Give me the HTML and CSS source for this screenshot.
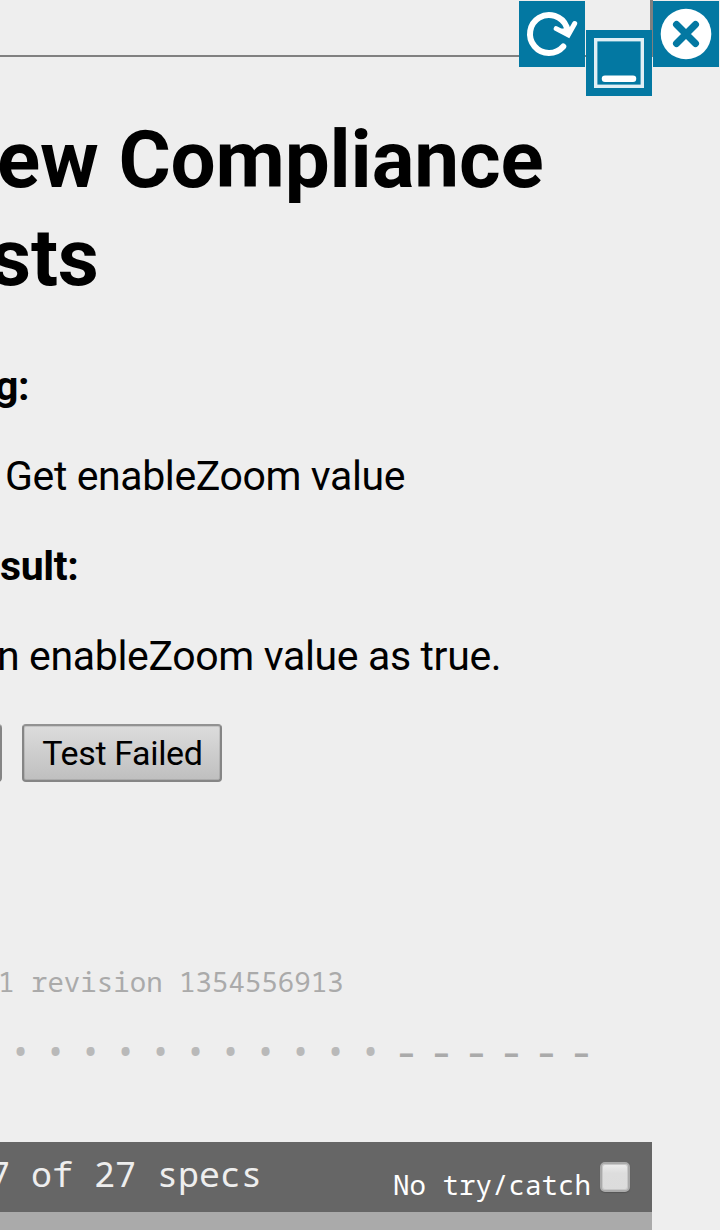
FILE: index.html
```
<!DOCTYPE html>
<html lang="en">
<head>
<meta charset="utf-8">
<title>Compliance Tests</title>
<link rel="stylesheet" href="styles.css">
</head>
<body>
<div class="frame-edge"></div>
<div class="controls">
  <svg class="control" viewBox="0 0 66 66"><rect class="tile" width="66" height="66"/><path class="reload" d="M44.3 45.5A19 19 0 1 1 47.5 25.6L49 31"/><path class="arrow" d="M37.2 27.6L49.3 34L55.7 22.5"/><path class="arrow-fill" d="M41 28L52.5 26L50 34Z"/></svg>
  <svg class="control control-low" viewBox="0 0 66 66"><rect class="tile" width="66" height="66"/><rect class="window" x="9.7" y="9.7" width="46.6" height="46.6"/><path class="bar" d="M19 48.7H47"/></svg>
  <svg class="control" viewBox="0 0 66 66"><rect class="tile" width="66" height="66"/><circle class="disc" cx="33" cy="33" r="25.3"/><path class="cross" d="M23.5 23.5L42.5 42.5M42.5 23.5L23.5 42.5"/></svg>
</div>
<main>
  <h1><span class="h-one">ew Compliance</span><br><span class="h-two">sts</span></h1>
  <h3 class="t-g">g:</h3>
  <p class="t-get">Get enableZoom value</p>
  <h3 class="t-result">sult:</h3>
  <p class="t-expect">n enableZoom value as true.</p>
  <div class="buttons"><button class="cut" aria-label="Previous"></button><button class="failed"><span>Test Failed</span></button></div>
  <div class="version">1 revision 1354556913</div>
  <div class="symbols"><i>•</i><i>•</i><i>•</i><i>•</i><i>•</i><i>•</i><i>•</i><i>•</i><i>•</i><i>•</i><i>•</i><b>-</b><b>-</b><b>-</b><b>-</b><b>-</b><b>-</b></div>
  <div class="alert"><span class="specs">7 of 27 specs</span><label><span>No try/catch</span><span class="check"></span></label></div>
  <div class="result-bar"></div>
</main>
</body>
</html>
```
FILE: styles.css
```
* { box-sizing: border-box; }
body { margin: 0; width: 720px; height: 1230px; overflow: hidden; background: #eee; color: #000; font-family: Roboto, sans-serif; position: relative; display: flex; flex-direction: column; }
.frame-edge { flex: none; width: 653px; height: 57px; border: solid #808080; border-width: 0 3px 2px 0; }
.controls { position: absolute; top: 1px; right: 1px; display: flex; gap: 1px; }
.control { width: 66px; height: 66px; display: block; }
.control-low { margin-top: 29px; }
.tile { fill: #0378a2; }
.reload { fill: none; stroke: #fff; stroke-width: 6; stroke-linecap: round; }
.arrow { fill: none; stroke: #fff; stroke-width: 5; stroke-linecap: round; stroke-linejoin: miter; }
.arrow-fill { fill: #fff; }
.window { fill: none; stroke: #e0eff5; stroke-width: 3.4; }
.bar { fill: none; stroke: #fff; stroke-width: 6.5; stroke-linecap: round; }
.disc { fill: #fff; }
.cross { stroke: #0378a2; stroke-width: 7; stroke-linecap: round; }
main { flex: none; width: 720px; }
h1, h3, p { margin: 0; white-space: nowrap; }
h1 { padding-top: 54px; height: 249px; font-size: 80px; line-height: 98px; font-weight: 700; letter-spacing: -0.15px; }
h1 span { display: inline-block; }
.h-one { margin-left: -3px; }
.h-two { margin-left: -10px; }
h3, p { font-size: 41px; line-height: 48px; height: 48px; margin-top: 42px; letter-spacing: -0.39px; }
h3 { font-weight: 700; }
.t-g { margin-top: 56px; margin-left: -5px; }
.t-get { margin-left: 5px; }
.t-expect { margin-left: -3px; letter-spacing: -0.35px; }
.buttons { display: flex; gap: 20px; margin-top: 44px; height: 58px; }
button { font: 34px/54px Roboto, sans-serif; letter-spacing: -0.36px; color: #000; padding: 0; border: 2px solid #858585; border-top-color: #929292; border-radius: 4px; background: linear-gradient(#dcdcdc, #bfbfbf); box-shadow: inset 0 0 0 1px rgba(0, 0, 0, 0.1); height: 58px; white-space: nowrap; }
.cut { width: 20px; margin-left: -17.6px; }
.failed { width: 200px; }
.version, .symbols, .alert { font-family: "Droid Sans Mono", "Noto Sans Mono", "DejaVu Sans Mono", monospace; white-space: nowrap; }
.version { margin-top: 182px; height: 36px; font-size: 27.45px; line-height: 36px; color: #aaa; margin-left: -2px; }
.symbols { margin: 31px 0 0 3px; height: 40px; display: flex; font-size: 36px; line-height: 41px; }
.symbols i, .symbols b { width: 35px; text-align: center; font-style: normal; font-weight: 400; }
.symbols i { color: #b9b9b9; }
.symbols b { color: #aaa; font-size: 43px; line-height: 39px; position: relative; left: 1px; }
.alert { margin-top: 71px; width: 652px; height: 70px; background: #666; color: #eee; font-size: 35px; display: flex; justify-content: space-between; }
.specs { line-height: 63px; margin-left: -11px; }
label { display: flex; padding-right: 22px; font-size: 27.5px; line-height: 86px; color: #fff; }
.check { width: 30px; height: 30px; margin: 20px 0 0 9px; border: 2px solid #aaa; border-radius: 5px; background: linear-gradient(#eee, #ddd 35%, #dcdcdc); box-shadow: inset 0 0 0 1px #c8c8c8, 0 1px 1px #555; }
.result-bar { width: 652px; height: 18px; background: #aaa; }
```
